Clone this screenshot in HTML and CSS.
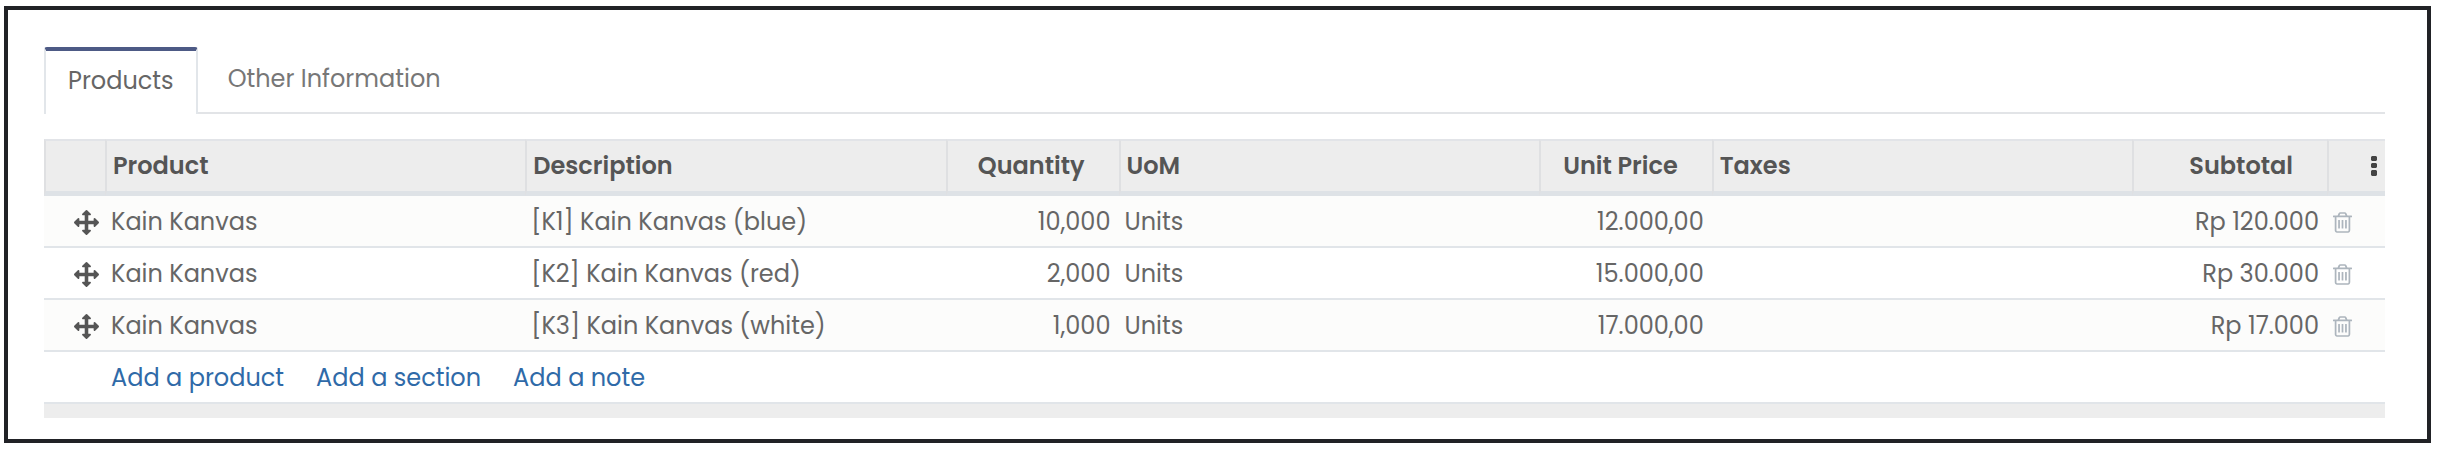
FILE: index.html
```html
<!DOCTYPE html>
<html lang="en">
<head>
    <meta charset="UTF-8">
    <meta name="viewport" content="width=device-width,initial-scale=1">
    <title>Products</title>
    <link rel="stylesheet" href="styles.css">
</head>
<body>
    <svg class="sprite" aria-hidden="true">
        <symbol id="move" viewBox="0 0 1792 1792">
            <path d="M1792 896q0 26-19 45l-256 256q-19 19-45 19t-45-19-19-45v-128h-384v384h128q26 0 45 19t19 45-19 45l-256 256q-19 19-45 19t-45-19l-256-256q-19-19-19-45t19-45 45-19h128v-384h-384v128q0 26-19 45t-45 19-45-19l-256-256q-19-19-19-45t19-45l256-256q19-19 45-19t45 19 19 45v128h384v-384h-128q-26 0-45-19t-19-45 19-45l256-256q19-19 45-19t45 19l256 256q19 19 19 45t-19 45-45 19h-128v384h384v-128q0-26 19-45t45-19 45 19l256 256q19 19 19 45z"/>
        </symbol>
        <symbol id="trash" viewBox="192 128 1408 1536">
            <path d="M704 736v576q0 14-9 23t-23 9h-64q-14 0-23-9t-9-23v-576q0-14 9-23t23-9h64q14 0 23 9t9 23zm256 0v576q0 14-9 23t-23 9h-64q-14 0-23-9t-9-23v-576q0-14 9-23t23-9h64q14 0 23 9t9 23zm256 0v576q0 14-9 23t-23 9h-64q-14 0-23-9t-9-23v-576q0-14 9-23t23-9h64q14 0 23 9t9 23zm128 724v-948h-896v948q0 22 7 40.500t14.500 27 10.500 8.500h832q3 0 10.500-8.500t14.500-27 7-40.500zm-672-1076h448l-48-117q-7-9-17-11h-317q-10 2-17 11zm928 32v64q0 14-9 23t-23 9h-96v948q0 83-47 143.500t-113 60.500h-832q-66 0-113-58.500t-47-141.500v-952h-96q-14 0-23-9t-9-23v-64q0-14 9-23t23-9h309l70-167q15-37 54-63t79-26h320q40 0 79 26t54 63l70 167h309q14 0 23 9t9 23z"/>
        </symbol>
        <symbol id="dots" viewBox="0 0 6 20">
            <path d="M1 0h4l1 1v3l-1 1h-4l-1-1v-3zM1 7h4l1 1v3l-1 1h-4l-1-1v-3zM1 14h4l1 1v4l-1 1h-4l-1-1v-4z"/>
        </symbol>
    </svg>
    <div class="sheet">
        <ul class="tabs">
            <li><a class="tab on" href="#products">Products</a></li>
            <li><a class="tab" href="#other">Other Information</a></li>
        </ul>
        <table class="lines" id="products">
            <colgroup>
                <col class="col-handle">
                <col>
                <col>
                <col class="col-num">
                <col>
                <col class="col-num">
                <col>
                <col class="col-total">
                <col class="col-action">
            </colgroup>
            <thead>
                <tr>
                    <th></th>
                    <th>Product</th>
                    <th>Description</th>
                    <th class="num">Quantity</th>
                    <th>UoM</th>
                    <th class="num">Unit Price</th>
                    <th>Taxes</th>
                    <th class="num">Subtotal</th>
                    <th class="more"><button class="btn" type="button" aria-label="Optional columns"><svg class="dots"><use href="#dots"/></svg></button></th>
                </tr>
            </thead>
            <tbody>
                <tr>
                    <td class="handle"><svg class="move"><use href="#move"/></svg></td>
                    <td>Kain Kanvas</td>
                    <td>[K1] Kain Kanvas (blue)</td>
                    <td class="num">10,000</td>
                    <td>Units</td>
                    <td class="num">12.000,00</td>
                    <td></td>
                    <td class="num">Rp 120.000</td>
                    <td><button class="btn" type="button" aria-label="Delete row"><svg class="trash"><use href="#trash"/></svg></button></td>
                </tr>
                <tr>
                    <td class="handle"><svg class="move"><use href="#move"/></svg></td>
                    <td>Kain Kanvas</td>
                    <td>[K2] Kain Kanvas (red)</td>
                    <td class="num">2,000</td>
                    <td>Units</td>
                    <td class="num">15.000,00</td>
                    <td></td>
                    <td class="num">Rp 30.000</td>
                    <td><button class="btn" type="button" aria-label="Delete row"><svg class="trash"><use href="#trash"/></svg></button></td>
                </tr>
                <tr>
                    <td class="handle"><svg class="move"><use href="#move"/></svg></td>
                    <td>Kain Kanvas</td>
                    <td>[K3] Kain Kanvas (white)</td>
                    <td class="num">1,000</td>
                    <td>Units</td>
                    <td class="num">17.000,00</td>
                    <td></td>
                    <td class="num">Rp 17.000</td>
                    <td><button class="btn" type="button" aria-label="Delete row"><svg class="trash"><use href="#trash"/></svg></button></td>
                </tr>
                <tr>
                    <td></td>
                    <td colspan="8">
                        <div class="add">
                            <a href="#product">Add a product</a>
                            <a href="#section">Add a section</a>
                            <a href="#note">Add a note</a>
                        </div>
                    </td>
                </tr>
            </tbody>
            <tfoot>
                <tr><td colspan="9"></td></tr>
            </tfoot>
        </table>
    </div>
</body>
</html>
```
FILE: styles.css
```css
*{margin:0;padding:0;box-sizing:border-box;}
body {
    background:#fff;
    color:#666;
    font:24px/32px Poppins,Inter,sans-serif;
}
li{list-style:none;}
a {
    color:#2f6aa8;
    text-decoration:none;
}
.sprite {
    display:none;
}
.sheet {
    margin:6px 9px 6px 4px;
    padding:37px 42px 21px 36px;
    border:4px solid #212226;
}
.tabs {
    display:flex;
    border-bottom:2px solid #e2e4e7;
}
.tab {
    display:block;
    height:65px;
    padding:16px 30px;
    color:#777;
}
.tab.on {
    height:67px;
    margin-bottom:-2px;
    padding:14px 22px;
    border:2px solid #e2e6ea;
    border-top:4px solid #4d5a85;
    border-bottom:0;
    border-radius:3px 3px 0 0;
    background:#fff;
    color:#666;
}
.lines {
    width:100%;
    margin-top:25px;
    table-layout:fixed;
    border-collapse:separate;
    border-spacing:0;
}
.col-handle {
    width:61px;
}
.col-num {
    width:173px;
}
.col-total {
    width:195px;
}
.col-action {
    width:58px;
}
th {
    height:57px;
    padding:0 6px;
    border-top:2px solid #e2e4e8;
    border-left:2px solid #dfe0e2;
    border-bottom:5px solid #dee2e6;
    background:#ededed;
    color:#555;
    font-weight:600;
    text-align:left;
    white-space:nowrap;
}
td {
    height:52px;
    padding:2px 6px 0;
    border-bottom:2px solid #e1e5e9;
    white-space:nowrap;
}
tbody tr:nth-child(odd) {
    background:#fcfcfb;
}
.num {
    padding-right:8px;
    text-align:right;
}
th.num {
    padding-right:34px;
}
th.more {
    padding-right:8px;
    text-align:right;
}
.handle {
    padding-left:30px;
}
svg {
    display:block;
    fill:currentColor;
}
.move {
    width:25px;
    height:25px;
    color:#555;
}
.trash {
    width:19px;
    height:21px;
    color:#adb5bd;
}
.dots {
    width:6px;
    height:20px;
    color:#444;
}
.btn {
    display:block;
    border:0;
    background:none;
    cursor:pointer;
}
.more .btn {
    margin-left:auto;
}
.add {
    display:flex;
    gap:32px;
}
tfoot td {
    height:14px;
    border-bottom:0;
    background:#ededed;
}
```
